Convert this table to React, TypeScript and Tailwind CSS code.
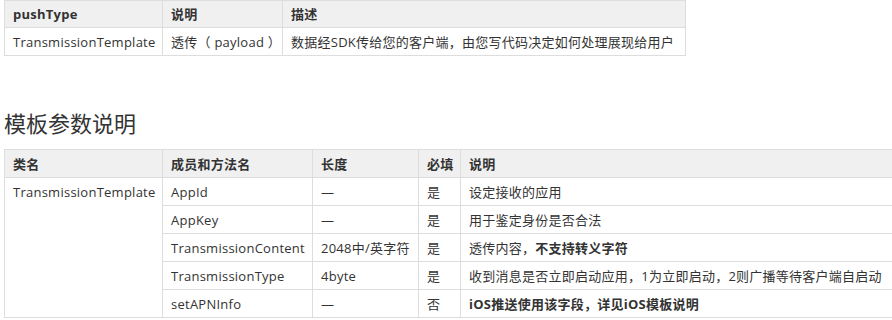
const font = {
  fontFamily: '"Open Sans", "Noto Sans CJK SC", sans-serif',
};

function Th({ children, w }: { children: React.ReactNode; w: string }) {
  return (
    <th
      className={
        "border border-[#dddddd] bg-[#f0f0f0] px-2 text-left font-bold align-middle whitespace-nowrap " +
        w
      }
    >
      {children}
    </th>
  );
}

function Td({ children, rowSpan }: { children: React.ReactNode; rowSpan?: number }) {
  return (
    <td
      rowSpan={rowSpan}
      className={
        "border border-[#dddddd] px-2 whitespace-nowrap " +
        (rowSpan ? "align-top pt-[4px]" : "align-middle")
      }
    >
      {children}
    </td>
  );
}

const params = [
  { name: "AppId", len: "—", req: "是", desc: <>设定接收的应用</> },
  { name: "AppKey", len: "—", req: "是", desc: <>用于鉴定身份是否合法</> },
  {
    name: "TransmissionContent",
    len: "2048中/英字符",
    req: "是",
    desc: (
      <>
        透传内容，<b>不支持转义字符</b>
      </>
    ),
  },
  {
    name: "TransmissionType",
    len: "4byte",
    req: "是",
    desc: <>收到消息是否立即启动应用，1为立即启动，2则广播等待客户端自启动</>,
  },
  {
    name: "setAPNInfo",
    len: "—",
    req: "否",
    desc: <b>iOS推送使用该字段，详见iOS模板说明</b>,
  },
];

export default function App() {
  return (
    <div
      className="w-[892px] h-[320px] overflow-hidden bg-white text-[13px] tracking-[0.25px] text-[#333333] pl-[4px]"
      style={font}
    >
      <table className="border-collapse table-fixed w-[681px] leading-[20px]">
        <thead>
          <tr className="h-[27px]">
            <Th w="w-[158px]">pushType</Th>
            <Th w="w-[120px]">说明</Th>
            <Th w="w-[403px]">描述</Th>
          </tr>
        </thead>
        <tbody>
          <tr className="h-[28px]">
            <Td>TransmissionTemplate</Td>
            <Td>透传（ payload ）</Td>
            <Td>数据经SDK传给您的客户端，由您写代码决定如何处理展现给用户</Td>
          </tr>
        </tbody>
      </table>

      <h2 className="mt-[54px] mb-[13px] text-[22px] leading-[26px] font-normal tracking-normal text-[#333333]">
        模板参数说明
      </h2>

      <table className="border-collapse table-fixed w-[888px] leading-[20px]">
        <thead>
          <tr className="h-[28px]">
            <Th w="w-[158px]">类名</Th>
            <Th w="w-[150px]">成员和方法名</Th>
            <Th w="w-[106px]">长度</Th>
            <Th w="w-[42px]">必填</Th>
            <Th w="w-[432px]">说明</Th>
          </tr>
        </thead>
        <tbody>
          {params.map((p, i) => (
            <tr key={p.name} className="h-[28px]">
              {i === 0 && <Td rowSpan={5}>TransmissionTemplate</Td>}
              <Td>{p.name}</Td>
              <Td>{p.len}</Td>
              <Td>{p.req}</Td>
              <Td>{p.desc}</Td>
            </tr>
          ))}
        </tbody>
      </table>
    </div>
  );
}
